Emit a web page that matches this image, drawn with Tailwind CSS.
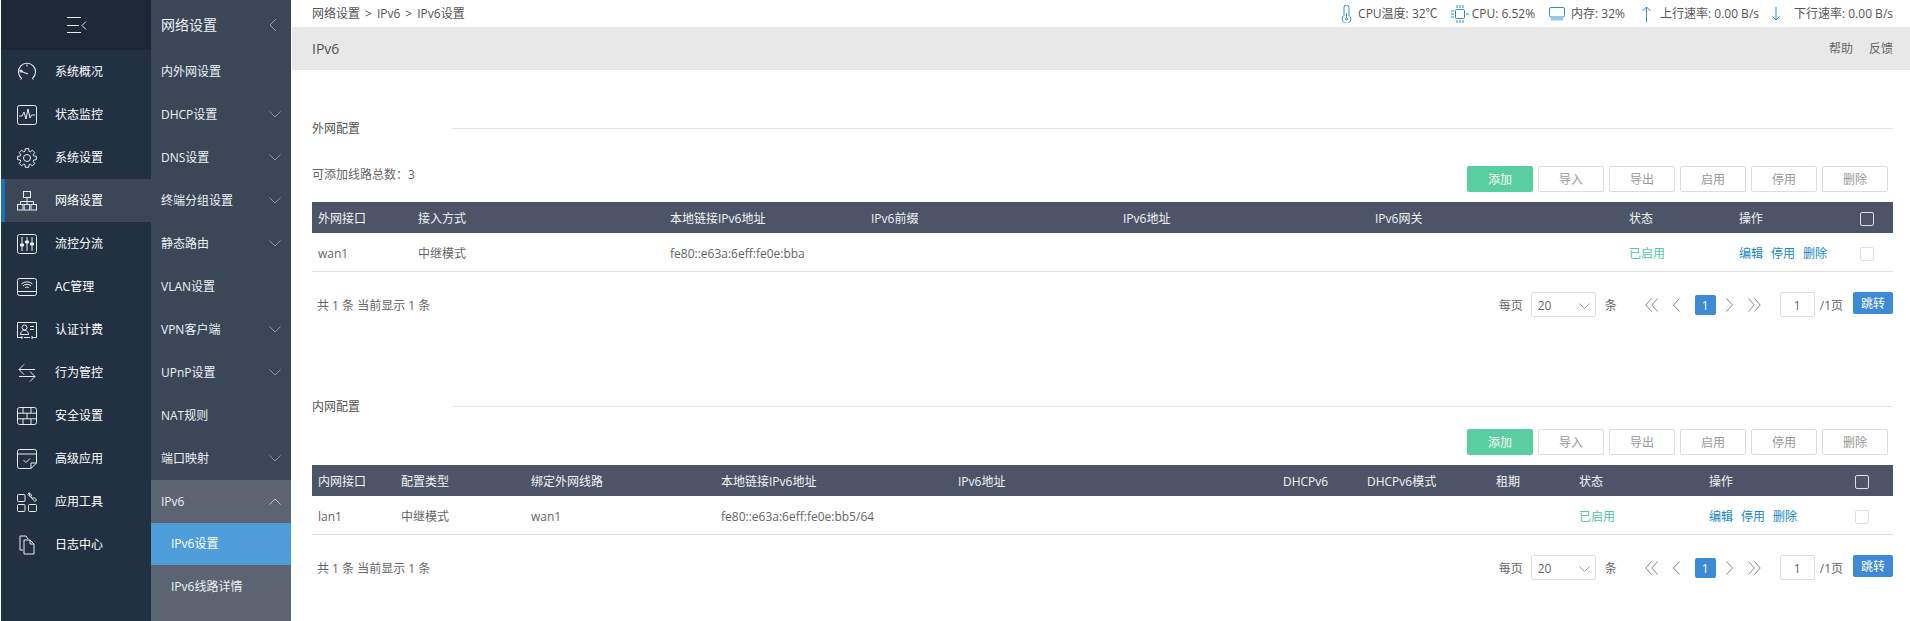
<!DOCTYPE html>
<html lang="en">
<head>
  <meta charset="UTF-8"/>
  <title>IPv6设置</title>
  <script src="https://cdn.jsdelivr.net/npm/@tailwindcss/browser@4"></script>
</head>
<body class="flex h-[621px] w-[1910px] overflow-hidden bg-white text-xs text-[#666] [font-family:'Open_Sans','Noto_Sans_CJK_SC',sans-serif]">

  <!-- main menu -->
  <aside class="ml-px w-[150px] shrink-0 bg-[#223142] text-white">
    <div class="flex h-[50px] items-center bg-[#1c2836] pl-[65px]">
      <svg width="22" height="20" viewBox="0 0 22 20" fill="none" stroke="#e8ecef" stroke-width="1"><path d="M1 2.500h14M1 10.500h12M1 17.500h14M20 6.500l-4 4 4 4"/></svg>
    </div>
    <nav>
      <a class="flex h-[43px] items-center pl-[16px]">
        <svg class="mr-[18px]" width="20" height="20" viewBox="0 0 20 20" fill="none" stroke="#e8ecef" stroke-width="1.100"><path d="M3.500 17.500l1-1.200a8.500 8.500 0 1 1 11 0l1 1.200"/><path d="M10 2.500v2M4.500 9.500l6.500 2.500"/><circle cx="4" cy="9" r="1"/></svg>
        系统概况
      </a>
      <a class="flex h-[43px] items-center pl-[16px]">
        <svg class="mr-[18px]" width="20" height="20" viewBox="0 0 20 20" fill="none" stroke="#e8ecef"><rect x="0.500" y="0.500" width="19" height="19" rx="2"/><path d="M2 11h3l2-4 2 7 2-10 2 9 1.500-3H18"/></svg>
        状态监控
      </a>
      <a class="flex h-[43px] items-center pl-[16px]">
        <svg class="mr-[18px]" width="20" height="20" viewBox="0 0 20 20" fill="none" stroke="#e8ecef" stroke-linejoin="round"><path d="M7.950 3.300L8.350.640H11.650L12.050 3.300L13.290 3.820L15.450 2.220L17.780 4.550L16.180 6.710L16.700 7.950L19.360 8.350V11.650L16.700 12.050L16.180 13.290L17.780 15.450L15.450 17.780L13.290 16.180L12.050 16.700L11.650 19.360H8.350L7.950 16.700L6.710 16.180L4.550 17.780L2.220 15.450L3.820 13.290L3.300 12.050L.640 11.650V8.350L3.300 7.950L3.820 6.710L2.220 4.550L4.550 2.220L6.710 3.820z"/><circle cx="10" cy="10" r="3.500"/></svg>
        系统设置
      </a>
      <a class="flex h-[43px] items-center border-l-4 border-[#1a74b4] bg-[#3b4757] pl-[12px]">
        <svg class="mr-[18px]" width="20" height="20" viewBox="0 0 20 20" fill="none" stroke="#e8ecef"><rect x="6.500" y="0.500" width="7" height="6"/><path d="M10 6.500v4M3.500 13.500v-3h13v3M10 10.500v3"/><rect x="0.500" y="13.500" width="5.500" height="5.500"/><rect x="7.200" y="13.500" width="5.500" height="5.500"/><rect x="14" y="13.500" width="5.500" height="5.500"/></svg>
        网络设置
      </a>
      <a class="flex h-[43px] items-center pl-[16px]">
        <svg class="mr-[18px]" width="20" height="20" viewBox="0 0 20 20" fill="none" stroke="#e8ecef"><rect x="0.500" y="0.500" width="19" height="19" rx="2"/><path d="M5 3v14M10 3v14M15 3v14"/><path d="M3.500 10h3v2h-3zM8.500 7h3v2h-3zM13.500 9h3v2h-3z" fill="#e8ecef"/></svg>
        流控分流
      </a>
      <a class="flex h-[43px] items-center pl-[16px]">
        <svg class="mr-[18px]" width="20" height="20" viewBox="0 0 20 20" fill="none" stroke="#e8ecef"><rect x="0.500" y="1.500" width="19" height="17" rx="2"/><path d="M.5 14.500h19M4.500 7a8 8 0 0 1 11 0M6 9a5.500 5.500 0 0 1 8 0M8 11a2.500 2.500 0 0 1 4 0"/></svg>
        AC管理
      </a>
      <a class="flex h-[43px] items-center pl-[16px]">
        <svg class="mr-[18px]" width="20" height="20" viewBox="0 0 20 20" fill="none" stroke="#e8ecef"><path d="M5 17.500H.5V2.500h19v15H15M7 17.500h6M5 16v3M15 16v3M13 6.500h4M13 9.500h4"/><circle cx="7.500" cy="7.500" r="2.500"/><path d="M3.500 14.500c0-2.500 1.500-3.500 3-4h2c1.500.500 3 1.500 3 4z"/></svg>
        认证计费
      </a>
      <a class="flex h-[43px] items-center pl-[16px]">
        <svg class="mr-[18px]" width="20" height="20" viewBox="0 0 20 20" fill="none" stroke="#e8ecef"><path d="M18 6.500H2M7 1.500l-5 5 5 5M2 13.500h16M13 8.500l5 5-5 5"/></svg>
        行为管控
      </a>
      <a class="flex h-[43px] items-center pl-[16px]">
        <svg class="mr-[18px]" width="20" height="20" viewBox="0 0 20 20" fill="none" stroke="#e8ecef"><rect x="0.500" y="1.500" width="19" height="17" rx="2"/><path d="M.5 7.200h19M.5 12.800h19M6 1.500v5.700M14 1.500v5.700M10 7.200v5.600M6 12.800v5.700M14 12.800v5.700"/></svg>
        安全设置
      </a>
      <a class="flex h-[43px] items-center pl-[16px]">
        <svg class="mr-[18px]" width="20" height="20" viewBox="0 0 20 20" fill="none" stroke="#e8ecef"><path d="M14 19.500H2.500a2 2 0 0 1-2-2V2.500a2 2 0 0 1 2-2h15a2 2 0 0 1 2 2V14zM14 19.500V14h5.500M.5 5h19M6.500 11l2.500 2.500 4-4"/></svg>
        高级应用
      </a>
      <a class="flex h-[43px] items-center pl-[16px]">
        <svg class="mr-[18px]" width="20" height="20" viewBox="0 0 20 20" fill="none" stroke="#e8ecef"><rect x="0.500" y="2.500" width="7.500" height="7" rx="1"/><rect x="0.500" y="12.500" width="7.500" height="7" rx="1"/><rect x="11.500" y="12.500" width="8" height="7" rx="1"/><path d="M12 .8l2.500 2-.500 2 1.500 1.500 2-.500 2 2.200-1.500 1.500-5-5z"/><path d="M12 .8L11 2.500l2 2"/></svg>
        应用工具
      </a>
      <a class="flex h-[43px] items-center pl-[16px]">
        <svg class="mr-[18px]" width="20" height="20" viewBox="0 0 20 20" fill="none" stroke="#e8ecef"><path d="M6 15H3V1h6l2 3M7 5h6l4 4v10H7zM13 5v4h4"/></svg>
        日志中心
      </a>
    </nav>
  </aside>

  <!-- sub menu -->
  <aside class="flex w-[140px] shrink-0 flex-col bg-[#3b4757] text-[#eef1f4]">
    <div class="flex h-[50px] items-center justify-between pl-[10px] pr-[14px] text-sm">
      网络设置
      <svg width="8" height="14" viewBox="0 0 8 14" fill="none" stroke="#98a1ab"><path d="M7 1L1 7l6 6"/></svg>
    </div>
    <a class="flex h-[43px] items-center pl-[10px]">内外网设置</a>
    <a class="flex h-[43px] items-center justify-between pl-[10px] pr-[10px]">DHCP设置<svg width="12" height="7" viewBox="0 0 12 7" fill="none" stroke="#8e97a2"><path d="M.5.500L6 6 11.500.500"/></svg></a>
    <a class="flex h-[43px] items-center justify-between pl-[10px] pr-[10px]">DNS设置<svg width="12" height="7" viewBox="0 0 12 7" fill="none" stroke="#8e97a2"><path d="M.5.500L6 6 11.500.500"/></svg></a>
    <a class="flex h-[43px] items-center justify-between pl-[10px] pr-[10px]">终端分组设置<svg width="12" height="7" viewBox="0 0 12 7" fill="none" stroke="#8e97a2"><path d="M.5.500L6 6 11.500.500"/></svg></a>
    <a class="flex h-[43px] items-center justify-between pl-[10px] pr-[10px]">静态路由<svg width="12" height="7" viewBox="0 0 12 7" fill="none" stroke="#8e97a2"><path d="M.5.500L6 6 11.500.500"/></svg></a>
    <a class="flex h-[43px] items-center pl-[10px]">VLAN设置</a>
    <a class="flex h-[43px] items-center justify-between pl-[10px] pr-[10px]">VPN客户端<svg width="12" height="7" viewBox="0 0 12 7" fill="none" stroke="#8e97a2"><path d="M.5.500L6 6 11.500.500"/></svg></a>
    <a class="flex h-[43px] items-center justify-between pl-[10px] pr-[10px]">UPnP设置<svg width="12" height="7" viewBox="0 0 12 7" fill="none" stroke="#8e97a2"><path d="M.5.500L6 6 11.500.500"/></svg></a>
    <a class="flex h-[43px] items-center pl-[10px]">NAT规则</a>
    <a class="flex h-[43px] items-center justify-between pl-[10px] pr-[10px]">端口映射<svg width="12" height="7" viewBox="0 0 12 7" fill="none" stroke="#8e97a2"><path d="M.5.500L6 6 11.500.500"/></svg></a>
    <div class="flex flex-1 flex-col bg-[#5b6470]">
      <a class="flex h-[43px] items-center justify-between pl-[10px] pr-[10px]">IPv6<svg width="12" height="7" viewBox="0 0 12 7" fill="none" stroke="#c3c8ce"><path d="M.5 6.500L6 1l5.500 5.500"/></svg></a>
      <a class="flex h-[42px] items-center bg-[#4f9dd9] pl-[20px] text-white">IPv6设置</a>
      <a class="flex h-[43px] items-center pl-[20px]">IPv6线路详情</a>
    </div>
  </aside>

  <main class="ml-px min-w-0 flex-1">
    <!-- top status bar -->
    <div class="flex h-[27px] items-center justify-between pl-[20px] pr-[17px] text-[#555]">
      <div class="flex gap-[5px]"><span>网络设置</span><span>&gt;</span><span>IPv6</span><span>&gt;</span><span>IPv6设置</span></div>
      <div class="flex items-center">
        <svg class="mr-[6px]" width="11" height="18" viewBox="0 0 11 18" fill="none" stroke="#2b8fd0"><path d="M3 10.500V2.500a2.500 2.500 0 0 1 5 0v8a4.300 4.300 0 1 1-5 0zM5.500 8v5"/><circle cx="5.500" cy="14" r="1"/></svg>
        <span>CPU温度: 32℃</span>
        <svg class="ml-[13px] mr-[3px]" width="18" height="18" viewBox="0 0 18 18" fill="none" stroke="#2b8fd0"><rect x="4.500" y="4.500" width="9" height="9" rx="1"/><path d="M6 0v3M9 0v3M12 0v3M6 15v3M9 15v3M12 15v3M0 6h3M0 9h3M0 12h3M15 9h3"/></svg>
        <span>CPU: 6.52%</span>
        <svg class="ml-[14px] mr-[6px]" width="16" height="14" viewBox="0 0 16 14" fill="none" stroke="#2b8fd0"><rect x="0.500" y="0.500" width="15" height="9.500" rx="1.500"/><path d="M3 11v2.500M5 11v2.500M7 11v2.500M9 11v2.500M11 11v2.500M13 11v2.500"/></svg>
        <span>内存: 32%</span>
        <svg class="ml-[17px] mr-[9px]" width="9" height="16" viewBox="0 0 9 16" fill="none" stroke="#2b8fd0"><path d="M4.500 16V1M.5 5l4-4 4 4"/></svg>
        <span>上行速率: 0.00 B/s</span>
        <svg class="ml-[13px] mr-[14px]" width="8" height="14" viewBox="0 0 8 14" fill="none" stroke="#2b8fd0"><path d="M4 0v13M.5 9.500L4 13l3.500-3.500"/></svg>
        <span>下行速率: 0.00 B/s</span>
      </div>
    </div>

    <div class="flex h-[43px] items-center justify-between bg-[#e8e8e8] pl-[20px] pr-[17px]">
      <span class="text-sm text-[#555]">IPv6</span>
      <div class="flex gap-[16px] text-[#666]"><a>帮助</a><a>反馈</a></div>
    </div>

    <div class="pl-[20px] pr-[17px]">
      <!-- WAN section -->
      <section class="pt-[47px]">
        <div class="flex h-[22px] items-center">
          <span class="w-[140px] pt-[2px] text-[#555]">外网配置</span>
          <span class="h-px flex-1 bg-[#e6e6e6]"></span>
        </div>
        <div class="mt-[27px] flex h-[26px] items-center justify-between pr-[5px]">
          <span class="-mt-[8px]">可添加线路总数：3</span>
          <div class="flex gap-[5px] text-[#999]">
            <button class="h-[26px] w-[66px] rounded-[2px] bg-[#59cea0] pt-[2px] text-white">添加</button>
            <button class="h-[26px] w-[66px] rounded-[2px] border border-[#ddd] pt-[2px]">导入</button>
            <button class="h-[26px] w-[66px] rounded-[2px] border border-[#ddd] pt-[2px]">导出</button>
            <button class="h-[26px] w-[66px] rounded-[2px] border border-[#ddd] pt-[2px]">启用</button>
            <button class="h-[26px] w-[66px] rounded-[2px] border border-[#ddd] pt-[2px]">停用</button>
            <button class="h-[26px] w-[66px] rounded-[2px] border border-[#ddd] pt-[2px]">删除</button>
          </div>
        </div>
        <div class="mt-[10px] grid h-[31px] grid-cols-[100px_252px_201px_252px_252px_254px_110px_121px_1fr] items-center bg-[#4d5468] pl-[6px] pt-[2px] text-[#f2f3f5]">
          <span>外网接口</span><span>接入方式</span><span>本地链接IPv6地址</span><span>IPv6前缀</span><span>IPv6地址</span><span>IPv6网关</span><span>状态</span><span>操作</span>
          <span class="size-[14px] rounded-[2px] border border-[#ddd]"></span>
        </div>
        <div class="grid h-[39px] grid-cols-[100px_252px_201px_252px_252px_254px_110px_121px_1fr] items-center border-b border-[#e0e0e0] pl-[6px] pt-[3px]">
          <span>wan1</span><span>中继模式</span><span>fe80::e63a:6eff:fe0e:bba</span><span></span><span></span><span></span>
          <span class="text-[#4fc999]">已启用</span>
          <span class="flex gap-[8px] text-[#1488c9]"><a>编辑</a><a>停用</a><a>删除</a></span>
          <span class="size-[14px] rounded-[2px] border border-[#e0e0e0]"></span>
        </div>
        <div class="mt-[20px] flex h-[25px] items-center pl-[5px]">
          <span class="pt-[2px]">共 1 条 当前显示 1 条</span>
          <div class="ml-auto flex items-center">
            <span class="pt-[2px]">每页</span>
            <div class="ml-[8px] flex h-[25px] w-[65px] items-center justify-between rounded-[2px] border border-[#ddd] pl-[6px] pr-[5px] pt-[2px]">20<svg width="11" height="6" viewBox="0 0 11 6" fill="none" stroke="#999"><path d="M.5.500l5 5 5-5"/></svg></div>
            <span class="ml-[9px] pt-[2px]">条</span>
            <svg class="ml-[28px]" width="13" height="14" viewBox="0 0 13 14" fill="none" stroke="#888"><path d="M6.500.500L.8 7l5.700 6.500M12.500.500L6.800 7l5.700 6.500"/></svg>
            <svg class="ml-[14px]" width="9" height="14" viewBox="0 0 9 14" fill="none" stroke="#888"><path d="M7.500.500L1.500 7l6 6.500"/></svg>
            <span class="ml-[14px] flex h-[20px] w-[21px] items-center justify-center rounded-[2px] bg-[#3d8bd6] pt-[2px] text-white">1</span>
            <svg class="ml-[9px]" width="9" height="14" viewBox="0 0 9 14" fill="none" stroke="#888"><path d="M1.500.500l6 6.500-6 6.500"/></svg>
            <svg class="ml-[14px]" width="13" height="14" viewBox="0 0 13 14" fill="none" stroke="#888"><path d="M.5.500L6.200 7 .5 13.500M6.500.500L12.200 7l-5.700 6.500"/></svg>
            <span class="ml-[19px] flex h-[25px] w-[35px] items-center justify-center rounded-[2px] border border-[#ddd] pt-[2px]">1</span>
            <span class="ml-[5px] pt-[2px]">/1页</span>
            <button class="ml-[10px] -mt-[3px] h-[22px] w-[40px] rounded-[2px] bg-[#3d8bd6] pt-[2px] text-white">跳转</button>
          </div>
        </div>
      </section>

      <!-- LAN section -->
      <section class="pt-[78px]">
        <div class="flex h-[22px] items-center">
          <span class="w-[140px] pt-[2px] text-[#555]">内网配置</span>
          <span class="h-px flex-1 bg-[#e6e6e6]"></span>
        </div>
        <div class="mt-[12px] flex h-[26px] items-center justify-end pr-[5px]">
          <div class="flex gap-[5px] text-[#999]">
            <button class="h-[26px] w-[66px] rounded-[2px] bg-[#59cea0] pt-[2px] text-white">添加</button>
            <button class="h-[26px] w-[66px] rounded-[2px] border border-[#ddd] pt-[2px]">导入</button>
            <button class="h-[26px] w-[66px] rounded-[2px] border border-[#ddd] pt-[2px]">导出</button>
            <button class="h-[26px] w-[66px] rounded-[2px] border border-[#ddd] pt-[2px]">启用</button>
            <button class="h-[26px] w-[66px] rounded-[2px] border border-[#ddd] pt-[2px]">停用</button>
            <button class="h-[26px] w-[66px] rounded-[2px] border border-[#ddd] pt-[2px]">删除</button>
          </div>
        </div>
        <div class="mt-[10px] grid h-[31px] grid-cols-[83px_130px_190px_237px_325px_84px_129px_83px_130px_146px_1fr] items-center bg-[#4d5468] pl-[6px] pt-[2px] text-[#f2f3f5]">
          <span>内网接口</span><span>配置类型</span><span>绑定外网线路</span><span>本地链接IPv6地址</span><span>IPv6地址</span><span>DHCPv6</span><span>DHCPv6模式</span><span>租期</span><span>状态</span><span>操作</span>
          <span class="size-[14px] rounded-[2px] border border-[#ddd]"></span>
        </div>
        <div class="grid h-[39px] grid-cols-[83px_130px_190px_237px_325px_84px_129px_83px_130px_146px_1fr] items-center border-b border-[#e0e0e0] pl-[6px] pt-[3px]">
          <span>lan1</span><span>中继模式</span><span>wan1</span><span>fe80::e63a:6eff:fe0e:bb5/64</span><span></span><span></span><span></span><span></span>
          <span class="text-[#4fc999]">已启用</span>
          <span class="flex gap-[8px] text-[#1488c9]"><a>编辑</a><a>停用</a><a>删除</a></span>
          <span class="size-[14px] rounded-[2px] border border-[#e0e0e0]"></span>
        </div>
        <div class="mt-[20px] flex h-[25px] items-center pl-[5px]">
          <span class="pt-[2px]">共 1 条 当前显示 1 条</span>
          <div class="ml-auto flex items-center">
            <span class="pt-[2px]">每页</span>
            <div class="ml-[8px] flex h-[25px] w-[65px] items-center justify-between rounded-[2px] border border-[#ddd] pl-[6px] pr-[5px] pt-[2px]">20<svg width="11" height="6" viewBox="0 0 11 6" fill="none" stroke="#999"><path d="M.5.500l5 5 5-5"/></svg></div>
            <span class="ml-[9px] pt-[2px]">条</span>
            <svg class="ml-[28px]" width="13" height="14" viewBox="0 0 13 14" fill="none" stroke="#888"><path d="M6.500.500L.8 7l5.700 6.500M12.500.500L6.800 7l5.700 6.500"/></svg>
            <svg class="ml-[14px]" width="9" height="14" viewBox="0 0 9 14" fill="none" stroke="#888"><path d="M7.500.500L1.500 7l6 6.500"/></svg>
            <span class="ml-[14px] flex h-[20px] w-[21px] items-center justify-center rounded-[2px] bg-[#3d8bd6] pt-[2px] text-white">1</span>
            <svg class="ml-[9px]" width="9" height="14" viewBox="0 0 9 14" fill="none" stroke="#888"><path d="M1.500.500l6 6.500-6 6.500"/></svg>
            <svg class="ml-[14px]" width="13" height="14" viewBox="0 0 13 14" fill="none" stroke="#888"><path d="M.5.500L6.200 7 .5 13.500M6.500.500L12.200 7l-5.700 6.500"/></svg>
            <span class="ml-[19px] flex h-[25px] w-[35px] items-center justify-center rounded-[2px] border border-[#ddd] pt-[2px]">1</span>
            <span class="ml-[5px] pt-[2px]">/1页</span>
            <button class="ml-[10px] -mt-[3px] h-[22px] w-[40px] rounded-[2px] bg-[#3d8bd6] pt-[2px] text-white">跳转</button>
          </div>
        </div>
      </section>
    </div>
  </main>
</body>
</html>
